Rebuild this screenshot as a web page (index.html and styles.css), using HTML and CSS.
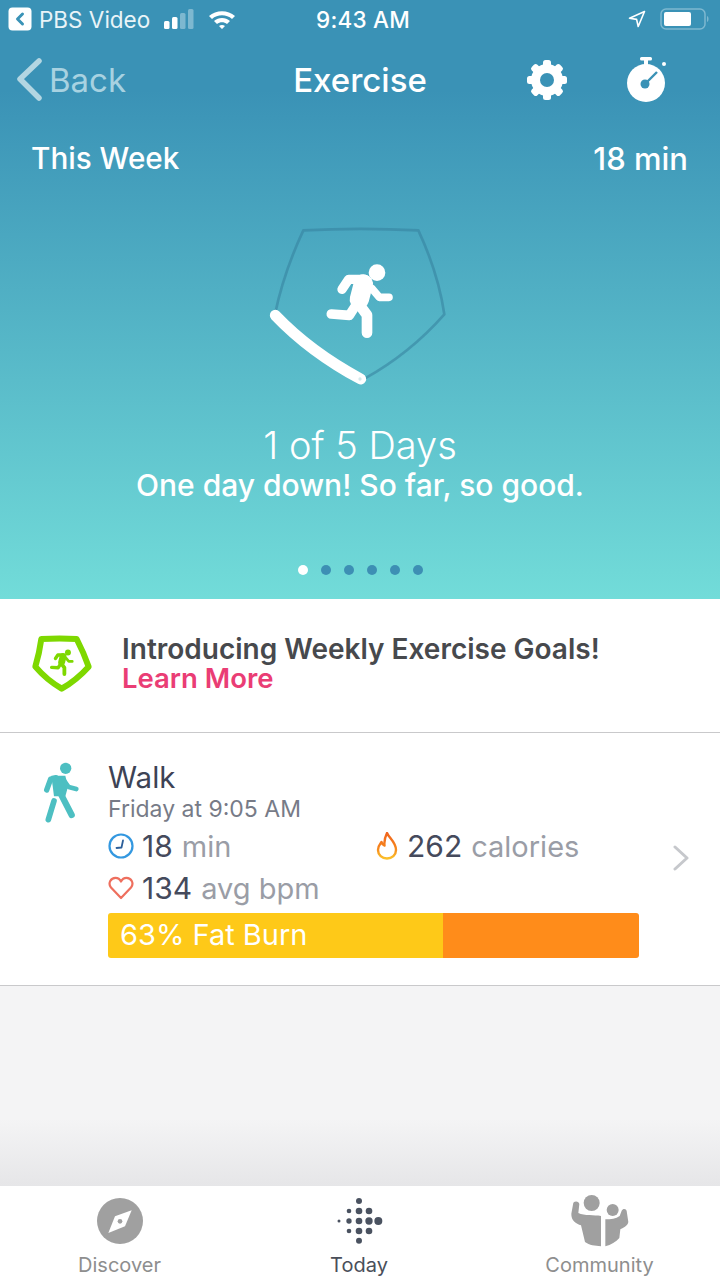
FILE: index.html
```html
<!DOCTYPE html>
<html lang="en">
<head>
    <meta charset="UTF-8">
    <meta name="viewport" content="width=device-width, initial-scale=1.0">
    <title>Exercise</title>
    <link rel="stylesheet" href="styles.css">
</head>
<body>
    <svg class="defs" width="0" height="0">
        <defs>
            <linearGradient id="flame" x1="0" y1="0" x2="0" y2="1">
                <stop offset="0" stop-color="#f0641e"/>
                <stop offset="0.6" stop-color="#f6861c"/>
                <stop offset="1" stop-color="#fbc02a"/>
            </linearGradient>
        </defs>
        <symbol id="runner" viewBox="225 155 212 238">
            <circle cx="381" cy="188" r="25" fill="currentColor"/>
            <path d="M276 238 L296 208 L345 208" fill="none" stroke="currentColor" stroke-width="28" stroke-linecap="round" stroke-linejoin="round"/>
            <path d="M340 222 L328 268" fill="none" stroke="currentColor" stroke-width="58" stroke-linecap="round"/>
            <path d="M365 235 L388 262 L417 262" fill="none" stroke="currentColor" stroke-width="23" stroke-linecap="round" stroke-linejoin="round"/>
            <path d="M318 285 L298 316 L244 312" fill="none" stroke="currentColor" stroke-width="29" stroke-linecap="round" stroke-linejoin="round"/>
            <path d="M325 280 L351 315 L351 368" fill="none" stroke="currentColor" stroke-width="32" stroke-linecap="round" stroke-linejoin="round"/>
        </symbol>
    </svg>

    <div class="hero">
        <div class="status">
            <div class="status-left">
                <span class="back-app">
                    <svg width="24" height="24" viewBox="0 0 24 24"><rect width="23" height="23" x="0.5" y="0.5" rx="4" fill="#fff"/><path d="M14.5 7 L9.5 12 L14.5 17" fill="none" stroke="#3a93b7" stroke-width="3" stroke-linecap="round" stroke-linejoin="round"/></svg>
                </span>
                <span class="app-name">PBS Video</span>
                <svg class="signal" width="34" height="20" viewBox="0 0 34 20">
                    <rect x="1" y="12" width="5.5" height="8" rx="1.5" fill="#fff"/>
                    <rect x="9" y="8" width="5.5" height="12" rx="1.5" fill="#fff"/>
                    <rect x="17" y="4" width="5.5" height="16" rx="1.5" fill="#7db8d0"/>
                    <rect x="25" y="0" width="5.5" height="20" rx="1.5" fill="#7db8d0"/>
                </svg>
                <svg class="wifi" width="28" height="20" viewBox="0 0 28 20">
                    <path d="M1 7 C8 0.5 20 0.5 27 7 L24 10 C18.5 5 9.5 5 4 10 Z M6 12 C10.5 8 17.5 8 22 12 L19 15 C16 12.5 12 12.5 9 15 Z M11 17 C13 15.5 15 15.5 17 17 L14 20 Z" fill="#fff"/>
                </svg>
            </div>
            <div class="status-time">9:43 AM</div>
            <div class="status-right">
                <svg width="18" height="18" viewBox="0 0 18 18"><path d="M16.5 1.5 L1.5 8.2 L8.6 9.4 L10.2 16.5 Z" fill="none" stroke="#fff" stroke-width="1.6" stroke-linejoin="round"/></svg>
                <svg width="50" height="22" viewBox="0 0 50 22">
                    <rect x="1" y="1" width="44" height="20" rx="5" fill="none" stroke="#7db8d0" stroke-width="1.5"/>
                    <rect x="4" y="4" width="27" height="14" rx="2" fill="#fff"/>
                    <path d="M47 8 C49 8.5 49 13.5 47 14 Z" fill="#7db8d0"/>
                </svg>
            </div>
        </div>

        <div class="nav">
            <div class="nav-back">
                <svg width="26" height="44" viewBox="0 0 26 44"><path d="M23 3 L4 21 L23 40" fill="none" stroke="#b3d6e2" stroke-width="5.5" stroke-linecap="round" stroke-linejoin="round"/></svg>
                <span>Back</span>
            </div>
            <div class="nav-title">Exercise</div>
            <div class="nav-actions">
                <svg width="42" height="42" viewBox="0 0 42 42">
                    <g fill="#fff">
                        <rect x="17" y="1" width="8" height="40" rx="2.5"/>
                        <rect x="17" y="1" width="8" height="40" rx="2.5" transform="rotate(45 21 21)"/>
                        <rect x="17" y="1" width="8" height="40" rx="2.5" transform="rotate(90 21 21)"/>
                        <rect x="17" y="1" width="8" height="40" rx="2.5" transform="rotate(135 21 21)"/>
                    </g>
                    <circle cx="21" cy="21" r="16" fill="#fff"/>
                    <circle cx="21" cy="21" r="7" fill="#3a92b6"/>
                </svg>
                <svg width="44" height="46" viewBox="0 0 44 46">
                    <rect x="15" y="0" width="12" height="3.5" rx="1.5" fill="#fff"/>
                    <rect x="19" y="2" width="4" height="6" fill="#fff"/>
                    <circle cx="21" cy="26" r="19" fill="#fff"/>
                    <circle cx="39" cy="7" r="2" fill="#fff"/>
                    <circle cx="20" cy="27" r="4.5" fill="#3a92b6"/>
                    <path d="M20 27 L32 15" stroke="#3a92b6" stroke-width="2.4"/>
                </svg>
            </div>
        </div>

        <div class="week">
            <span>This Week</span>
            <span class="week-total">18 min</span>
        </div>

        <svg class="goal" width="220" height="190" viewBox="0 0 660 570">
            <path d="M160 61 Q330 52 505 61 Q565 190 583 313 Q480 430 345 505 Q190 420 75 313 Q100 190 160 61 Z" fill="none" stroke="#35809c" stroke-opacity="0.55" stroke-width="8" stroke-linejoin="round"/>
            <path d="M76 316 Q180 425 332 507" fill="none" stroke="#fff" stroke-width="33" stroke-linecap="round"/>
            <circle cx="330" cy="507" r="5" fill="#d5e9ec"/>
            <use href="#runner" x="225" y="155" width="212" height="238" color="#fff"/>
        </svg>

        <div class="days">1 of 5 Days</div>
        <div class="cheer">One day down! So far, so good.</div>

        <div class="dots">
            <i class="on"></i><i></i><i></i><i></i><i></i><i></i>
        </div>
    </div>

    <div class="promo">
        <svg class="promo-badge" width="64" height="60" viewBox="90 42 192 180">
            <path d="M124 57 Q180 54 230 57 Q252 100 266 140 Q230 180 185 206 Q140 180 106 140 Q118 100 124 57 Z" fill="none" stroke="#7ed800" stroke-width="18" stroke-linejoin="round"/>
            <use href="#runner" x="148" y="86" width="76" height="85" color="#7ed800"/>
        </svg>
        <div class="promo-text">
            <div class="promo-title">Introducing Weekly Exercise Goals!</div>
            <div class="promo-link">Learn More</div>
        </div>
    </div>

    <div class="activity">
        <svg class="walk-icon" width="70" height="70" viewBox="0 0 210 210" fill="none" stroke="#4dbfc2" stroke-linecap="round" stroke-linejoin="round">
            <circle cx="107" cy="40" r="17" fill="#4dbfc2" stroke="none"/>
            <path d="M64 62 L106 62 L114 95 L106 124 L72 124 Z" fill="#4dbfc2" stroke="none"/>
            <path d="M78 68 L62 72 L50 105" stroke-width="16"/>
            <path d="M100 74 L116 96 L139 102" stroke-width="14"/>
            <path d="M92 116 L125 180" stroke-width="19"/>
            <path d="M72 138 L55 194" stroke-width="17"/>
        </svg>
        <div class="activity-body">
            <div class="activity-name">Walk</div>
            <div class="activity-when">Friday at 9:05 AM</div>
            <div class="stats">
                <div class="stat">
                    <svg width="26" height="26" viewBox="0 0 26 26"><circle cx="13" cy="13" r="11.5" fill="none" stroke="#3398e0" stroke-width="2.2"/><path d="M8.5 15 L13.5 14.5 L15 7.5" fill="none" stroke="#2c5f9a" stroke-width="1.8" stroke-linecap="round" stroke-linejoin="round"/></svg>
                    <b>18</b><span>min</span>
                </div>
                <div class="stat">
                    <svg width="24" height="28" viewBox="0 0 24 28"><path d="M12 1 C14 6 21 10 21 18 C21 23 17 26.5 12 26.5 C7 26.5 3 23 3 18 C3 14 5 12 6.5 10 C7 12 8 13 9.5 13.5 C9 9 10 5 12 1 Z" fill="none" stroke="url(#flame)" stroke-width="2.4" stroke-linejoin="round"/></svg>
                    <b>262</b><span>calories</span>
                </div>
                <div class="stat stat-wide">
                    <svg width="26" height="24" viewBox="0 0 26 24"><path d="M13 22 L3 11.5 C-0.5 7 3 1.8 7.5 1.8 C10 1.8 12 3.4 13 5.5 C14 3.4 16 1.8 18.5 1.8 C23 1.8 26.5 7 23 11.5 Z" fill="none" stroke="#ee6f5e" stroke-width="2.2" stroke-linejoin="round"/></svg>
                    <b>134</b><span>avg bpm</span>
                </div>
            </div>
            <div class="zone-bar">
                <div class="zone-fat">63% Fat Burn</div>
                <div class="zone-cardio"></div>
            </div>
        </div>
        <svg class="chevron" width="18" height="26" viewBox="0 0 18 26"><path d="M3 2 L15 13 L3 24" fill="none" stroke="#c6c8cc" stroke-width="3" stroke-linecap="round" stroke-linejoin="round"/></svg>
    </div>

    <div class="filler"></div>

    <div class="tabs">
        <div class="tab">
            <svg width="50" height="50" viewBox="105 50 150 150">
                <circle cx="180" cy="125" r="69" fill="#a0a0a0"/>
                <path d="M215 93 L195 141 L145 161 L165 111 Z" fill="#fff"/>
                <circle cx="180" cy="126" r="7" fill="#a0a0a0"/>
            </svg>
            <span>Discover</span>
        </div>
        <div class="tab tab-active">
            <svg width="50" height="50" viewBox="820 52 150 150" fill="#4a5260">
                <circle cx="895" cy="67" r="9"/>
                <circle cx="865" cy="97" r="7"/><circle cx="895" cy="97" r="10"/><circle cx="925" cy="97" r="10"/>
                <circle cx="835" cy="127" r="4.5"/><circle cx="865" cy="127" r="8"/><circle cx="895" cy="127" r="10"/><circle cx="925" cy="127" r="11"/><circle cx="953" cy="127" r="12"/>
                <circle cx="865" cy="157" r="7"/><circle cx="895" cy="157" r="10"/><circle cx="925" cy="157" r="10"/>
                <circle cx="895" cy="186" r="9"/>
            </svg>
            <span>Today</span>
        </div>
        <div class="tab">
            <svg class="community-icon" width="60" height="54" viewBox="147 46 180 162" fill="#a0a0a0">
                <circle cx="212" cy="73" r="24"/>
                <circle cx="275" cy="94" r="18"/>
                <path d="M157 72 C163 66 174 68 175 76 L172 103 C190 112 220 108 240 112 L240 203 C222 201 205 200 192 190 L180 140 C165 135 150 125 151 105 Z"/>
                <path d="M253 122 C270 122 285 120 296 112 L302 96 C306 88 316 90 317 97 L322 130 C320 142 305 148 298 152 L295 178 C285 190 270 198 253 203 Z"/>
            </svg>
            <span>Community</span>
        </div>
    </div>
</body>
</html>
```

FILE: styles.css
```css
* { box-sizing: border-box; }
html, body { margin: 0; padding: 0; }
body { width: 720px; height: 1280px; display: flex; flex-direction: column; background: #fff; font-family: Inter, "Noto Sans", sans-serif; overflow: hidden; }
svg { display: block; flex: none; }
.defs { position: absolute; }

.hero { height: 599px; display: flex; flex-direction: column; align-items: center; color: #fff; background: linear-gradient(#3a92b6 0, #3a92b6 90px, #72dcd9 100%); }

.status { width: 100%; height: 40px; padding: 0 10px 2px 8px; display: grid; grid-template-columns: 1fr auto 1fr; align-items: center; font-size: 22.5px; }
.status-left { display: flex; align-items: center; }
.app-name { margin-left: 7px; color: #e9f4f8; }
.signal { margin-left: 13px; }
.wifi { margin-left: 11px; }
.status-time { margin-left: 8px; font-weight: 500; letter-spacing: 0.2px; }
.status-right { display: flex; align-items: center; justify-content: flex-end; gap: 14px; }

.nav { width: 100%; height: 80px; padding: 0 16px; display: grid; grid-template-columns: 1fr auto 1fr; align-items: center; }
.nav-back { display: flex; align-items: center; gap: 7px; font-size: 33px; color: #a8d2e1; }
.nav-title { font-size: 33px; font-weight: 500; }
.nav-actions { padding-right: 35px; display: flex; align-items: center; justify-content: flex-end; gap: 57px; }

.week { width: 100%; height: 76px; padding: 0 32px 0 31px; display: flex; justify-content: space-between; align-items: center; font-size: 29.7px; font-weight: 500; }
.week-total { font-size: 31px; }

.goal { margin-top: 14px; margin-left: -1px; }
.days { margin-top: 23px; font-size: 38px; line-height: 44px; font-weight: 300; }
.cheer { font-size: 30px; line-height: 36px; font-weight: 500; }

.dots { margin-top: 62px; display: flex; gap: 13px; }
.dots i { width: 10px; height: 10px; border-radius: 50%; background: #3d8fb4; }
.dots i.on { background: #fff; }

.promo { height: 134px; padding: 0 0 3px 30px; display: flex; align-items: center; gap: 28px; border-bottom: 1px solid #c9c9cb; }
.promo-text { line-height: 29px; font-size: 27.5px; font-weight: 600; }
.promo-title { color: #47494d; font-size: 28px; white-space: nowrap; }
.promo-link { color: #ea3d75; }

.activity { height: 253px; padding: 22px 0 0 30px; display: flex; border-bottom: 1px solid #c9c9cb; }
.activity-body { width: 531px; margin: 7px 0 0 8px; }
.activity-name { font-size: 29.5px; line-height: 30px; color: #3d4355; }
.activity-when { margin-top: 3px; font-size: 23px; line-height: 28px; color: #777b87; }
.stats { display: grid; grid-template-columns: 267px auto; margin-top: 2px; }
.stat { height: 42px; display: flex; align-items: center; gap: 8px; font-size: 29px; color: #9a9da6; white-space: nowrap; }
.stat b { margin-right: 1px; font-size: 30px; font-weight: 400; color: #454a5c; }
.stat-wide { grid-column: 1 / 3; }
.zone-bar { display: flex; height: 45px; margin-top: 4px; border-radius: 3px; overflow: hidden; }
.zone-fat { width: 335px; padding-left: 12px; background: #fec918; color: #fff; font-size: 29px; line-height: 44px; }
.zone-cardio { flex: 1; background: #ff8c1a; }
.chevron { margin: 90px 0 0 33px; }

.filler { flex: 1; background: linear-gradient(#f4f4f5 0, #f4f4f5 133px, #e6e6e8 100%); }

.tabs { height: 94px; display: grid; grid-template-columns: 239px 240px 241px; background: #fff; }
.tab { display: flex; flex-direction: column; align-items: center; justify-content: flex-end; gap: 6px; padding-bottom: 2px; font-size: 20px; line-height: 26px; color: #8e8e8e; }
.tab-active { color: #4a4f5a; }
.community-icon { margin-bottom: -2px; }
```
